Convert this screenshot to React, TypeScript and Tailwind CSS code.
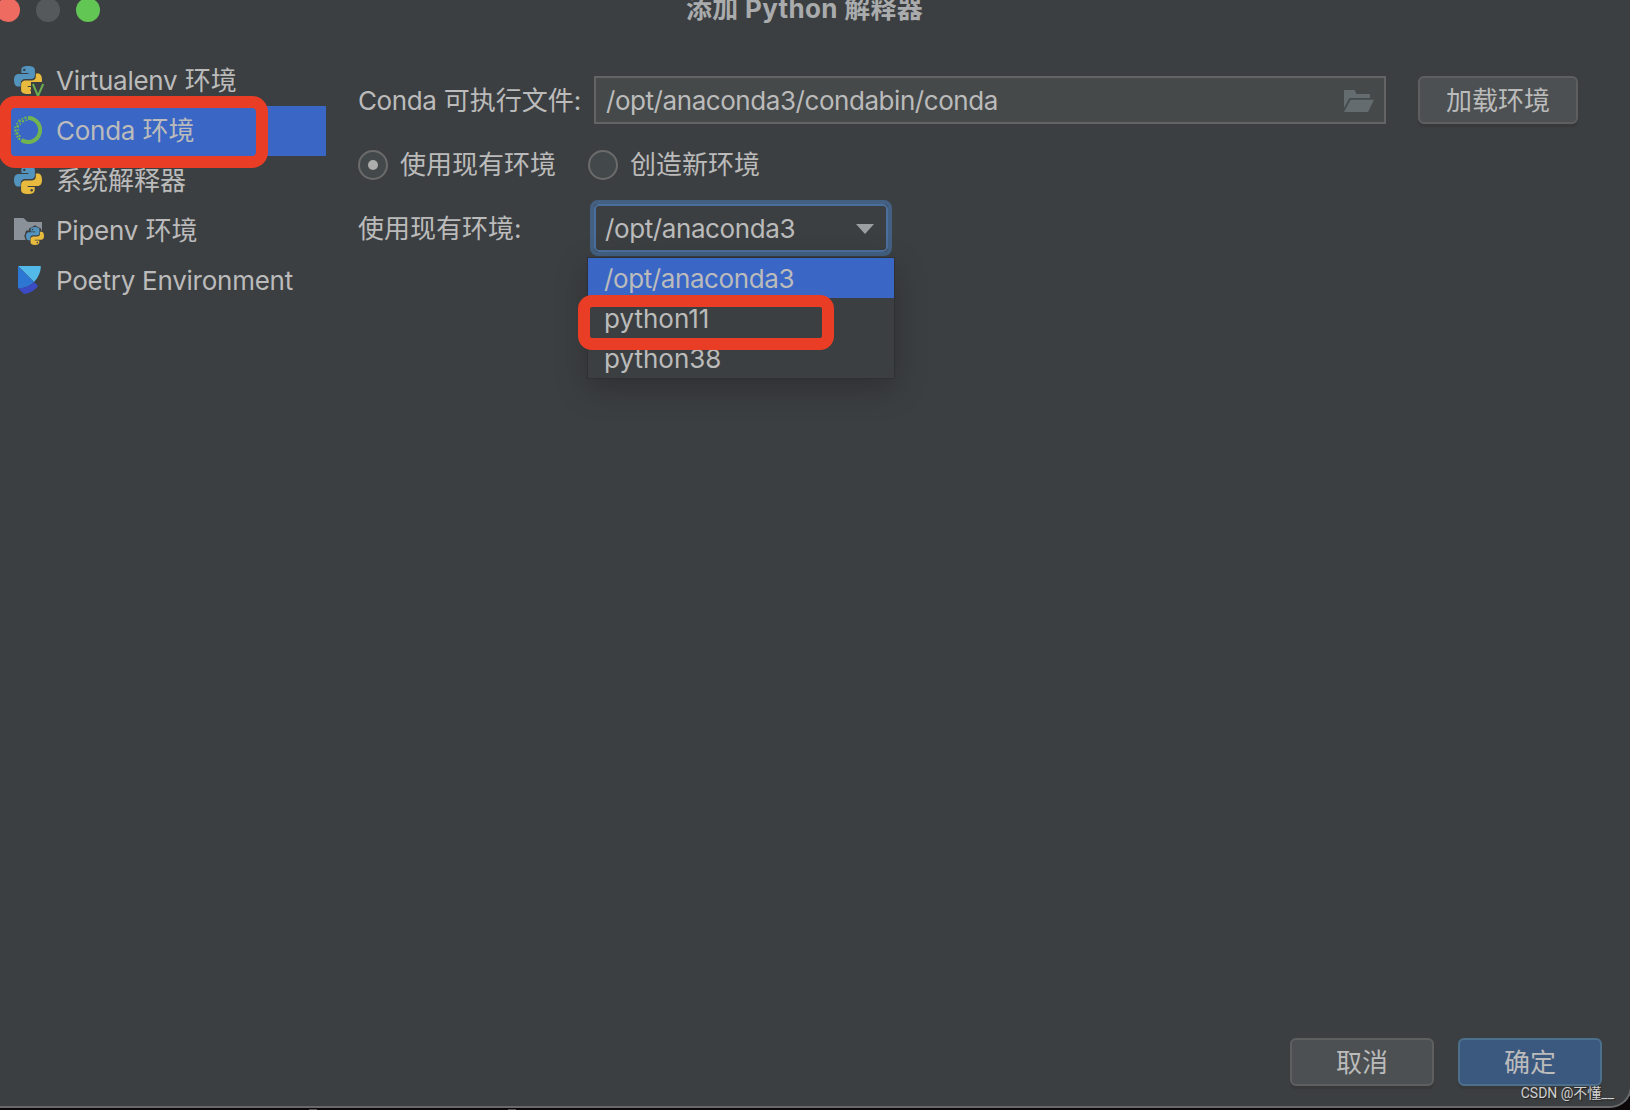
import { clsx } from 'clsx';
import type { ReactNode } from 'react';

const PythonIcon = ({ className, outline }: { className?: string; outline?: boolean }) => (
  <svg viewBox="0 0 28 28" className={clsx('overflow-visible', className)}>
    {outline && (
      <path
        fill="#3c3f41"
        stroke="#3c3f41"
        strokeWidth="5"
        d="M7 4L14 0l7 4v4h5l2 6-2 6h-5v4l-7 4-7-4v-4H2l-2-6 2-6h5z"
      />
    )}
    <path
      fill="#5394bf"
      d="M14 0C9.500 0 7.400 1.200 7.400 3.600V7h7v1H4.800C1.600 8 0 10.200 0 14c0 4.300 1.800 6.600 4.200 6.600h2.400v-3.400c0-2.500 1.900-4.300 4.400-4.300h6.200c2.200 0 3.700-1.500 3.700-3.700V3.800C20.900 1.400 18.300 0 14 0z"
    />
    <circle cx="10.300" cy="3.900" r="1.200" fill="#3c3f41" />
    <path
      fill="#e8bb3f"
      d="M14 28c4.500 0 6.700-1.300 6.700-3.700V21h-7v-1h9.700c3.100 0 4.600-2.200 4.600-6 0-4.300-1.600-6.600-4-6.600h-2.200v3.400c0 2.500-1.900 3.800-4.400 3.800h-6.100c-2.300 0-4.200 1.700-4.200 3.900v5.700C7.100 26.600 9.700 28 14 28z"
    />
    <circle cx="17.700" cy="24.300" r="1.200" fill="#3c3f41" />
  </svg>
);

const VirtualenvIcon = () => (
  <div className="relative h-7 w-7">
    <PythonIcon className="h-7 w-7" />
    <svg viewBox="0 0 14 15" className="absolute top-4 left-[17px] h-[15px] w-[14px]">
      <path fill="#3c3f41" d="M0 0h14v15H0z" />
      <path fill="none" stroke="#6cad50" strokeWidth="2" d="M1.900 2l5.100 12L12.200 2" />
    </svg>
  </div>
);

const CondaIcon = () => (
  <svg viewBox="0 0 28 28" className="h-7 w-7" fill="none" stroke="#72b352">
    <path strokeWidth="4" d="M14 2a12 12 0 1 1-6.500 22" />
    <g fill="#72b352" stroke="none">
      <circle cx="11.500" cy="1.700" r="1.300" />
      <circle cx="12.500" cy="4.200" r="0.900" />
      <circle cx="8.300" cy="2.700" r="1" />
      <circle cx="9" cy="5.200" r="1.200" />
      <circle cx="5.600" cy="5" r="1.400" />
      <circle cx="6.400" cy="8" r="0.900" />
      <circle cx="3.200" cy="7.600" r="1" />
      <circle cx="3.700" cy="10.400" r="1.400" />
      <circle cx="1.200" cy="11.400" r="0.900" />
      <circle cx="1.500" cy="14.500" r="1.300" />
      <circle cx="4.200" cy="14" r="0.900" />
      <circle cx="3.300" cy="17.400" r="1.300" />
      <circle cx="1.200" cy="18" r="0.700" />
      <circle cx="3.200" cy="20.800" r="1" />
      <circle cx="5.500" cy="20" r="1.200" />
      <circle cx="5.300" cy="23" r="1.200" />
    </g>
  </svg>
);

const PipenvIcon = () => (
  <div className="relative h-7 w-7">
    <svg viewBox="0 0 28 28" className="h-7 w-7">
      <path fill="#8a9199" d="M0 2h9c2 0 3 4 6 4h13v18H0z" />
    </svg>
    <PythonIcon outline className="absolute top-[11px] left-3 h-[18px] w-[18px]" />
  </div>
);

const PoetryIcon = () => (
  <svg viewBox="0 0 28 28" className="h-7 w-7">
    <path fill="#53b9e9" d="M4 0h22.800c0 6-2.500 11.500-6.800 16z" />
    <path fill="#2e76d3" d="M4 0l16 16C16 20 10.500 22.300 4 22.300z" />
    <path fill="#3a4bc4" d="M4 22.300c6.500 0 12-2.300 16.200-6.300l4 4C20.500 24.500 15.500 27.500 10 28z" />
  </svg>
);

const items = [
  { label: 'Virtualenv', suffix: ' 环境', icon: <VirtualenvIcon /> },
  { label: 'Conda', suffix: ' 环境', icon: <CondaIcon />, active: true },
  { label: '', suffix: '系统解释器', icon: <PythonIcon className="h-7 w-7" /> },
  { label: 'Pipenv', suffix: ' 环境', icon: <PipenvIcon /> },
  { label: 'Poetry Environment', suffix: '', icon: <PoetryIcon /> },
];

const envs = ['/opt/anaconda3', 'python11', 'python38'];

const Radio = ({ checked, children }: { checked?: boolean; children: ReactNode }) => (
  <label className="flex items-center gap-3">
    <span className="flex h-[30px] w-[30px] items-center justify-center rounded-full border-2 border-[#6b6b6b] bg-[#43494a]">
      {checked && <span className="h-2.5 w-2.5 rounded-full bg-[#adadad]" />}
    </span>
    <span>{children}</span>
  </label>
);

const Button = ({ primary, className, children }: { primary?: boolean; className?: string; children: ReactNode }) => (
  <button
    className={clsx(
      'h-12 rounded-md border-2 pt-0.5 shadow-[0_3px_1px_#37393b]',
      primary ? 'border-[#4c708c] bg-[#3b587f]' : 'border-[#5e6060] bg-[#4c5052]',
      className
    )}
  >
    {children}
  </button>
);

const App = () => {
  return (
    <div className="h-[1110px] w-[1630px] overflow-hidden bg-[#0c080a] font-['Inter','Noto_Sans_CJK_SC',sans-serif] text-[26px] leading-[30px] whitespace-nowrap text-[#bbbbbb]">
      <div className="relative flex h-[1108px] w-[1632px] flex-col rounded-br-[22px] border-r-2 border-b-2 border-[#67696a] bg-[#3c3f41]">
        <header className="relative h-10 shrink-0">
          <div className="-ml-1 flex gap-4">
            <span className="-mt-0.5 h-6 w-6 rounded-full bg-[#ed6b60]" />
            <span className="-mt-0.5 h-6 w-6 rounded-full bg-[#56595b]" />
            <span className="-mt-0.5 h-6 w-6 rounded-full bg-[#62c655]" />
          </div>
          <h1 className="absolute -top-1.5 left-[686px] font-bold tracking-[0.3px] text-[#a9abac]">
            添加 Python 解释器
          </h1>
        </header>

        <div className="flex flex-1">
          <nav className="relative w-[326px] pt-4">
            {items.map((item) => (
              <div
                key={item.suffix + item.label}
                className={clsx('flex h-[50px] items-center gap-3.5 pl-3.5', item.active && 'bg-[#3a66c5]')}
              >
                <div className="pb-0.5">{item.icon}</div>
                <span className="whitespace-pre">
                  <span className="tracking-[-0.25px]">{item.label}</span>
                  {item.suffix}
                </span>
              </div>
            ))}
            <div className="absolute top-14 -left-px h-[72px] w-[269px] rounded-[16px] border-[12px] border-[#ea3d25]" />
          </nav>

          <main className="flex-1 pt-9 pl-8">
            <div className="flex h-12 items-center">
              <span className="w-[236px] pt-0.5">
                <span className="tracking-[-0.4px]">Conda</span> 可执行文件:
              </span>
              <div className="flex h-12 w-[792px] items-center justify-between border-2 border-[#646464] bg-[#45494a] pr-2.5 pl-2.5">
                <span className="pt-0.5 tracking-[-0.44px]">/opt/anaconda3/condabin/conda</span>
                <svg viewBox="0 0 30 22" className="mt-0.5 h-[22px] w-[30px]" fill="#646c70">
                  <path d="M0 0h10.500l2 4H26v4H5.500L0 18z" />
                  <path d="M6.500 9.700H30L24 22H0z" />
                </svg>
              </div>
              <Button className="ml-8 w-40">加载环境</Button>
            </div>

            <div className="mt-[26px] flex h-[30px] items-center gap-8">
              <Radio checked>使用现有环境</Radio>
              <Radio>创造新环境</Radio>
            </div>

            <div className="mt-[20px] flex items-center">
              <span className="w-[232px] pt-0.5">使用现有环境:</span>
              <div className="relative">
                <div className="flex h-14 w-[302px] items-center justify-between rounded-lg border-4 border-[#436082] bg-[#3c3f41]">
                  <div className="flex h-12 w-full items-center justify-between rounded-[5px] border-2 border-[#4b6f9d] pr-3 pl-[9px]">
                    <span className="pt-0.5 tracking-[-0.4px]">/opt/anaconda3</span>
                    <svg viewBox="0 0 18 10" className="mt-0.5 h-2.5 w-[18px]" fill="#9b9fa1">
                      <path d="M0 0h18L9 10z" />
                    </svg>
                  </div>
                </div>
                <ul className="absolute top-[58px] -left-0.5 w-[306px] bg-[#3c3f41] shadow-[0_0_0_1px_#2e3032,0_10px_30px_rgba(0,0,0,0.25)]">
                  {envs.map((env, i) => (
                    <li
                      key={env}
                      className={clsx('flex h-10 items-center pt-0.5 pl-4', i === 0 && 'bg-[#3a66c5] tracking-[-0.4px]')}
                    >
                      {env}
                    </li>
                  ))}
                </ul>
                <div className="absolute top-[95px] -left-3 h-[55px] w-64 rounded-[14px] border-[12px] border-[#ea3d25]" />
              </div>
            </div>
          </main>
        </div>

        <footer className="mb-[20px] flex justify-end gap-6 pr-7">
          <Button className="w-36">取消</Button>
          <Button primary className="w-36">
            确定
          </Button>
        </footer>
        <span className="absolute right-4 -bottom-0.5 font-['Roboto','Noto_Sans_CJK_SC',sans-serif] text-[14px] text-[#d0d1d2] [text-shadow:1px_1px_1px_#222]">
          CSDN @不懂__
        </span>
      </div>
      <div className="flex gap-[191px] pt-px pl-[309px]">
        <span className="h-px w-2 bg-[#5a5557]" />
        <span className="h-px w-2 bg-[#5a5557]" />
      </div>
    </div>
  );
};

export default App;
